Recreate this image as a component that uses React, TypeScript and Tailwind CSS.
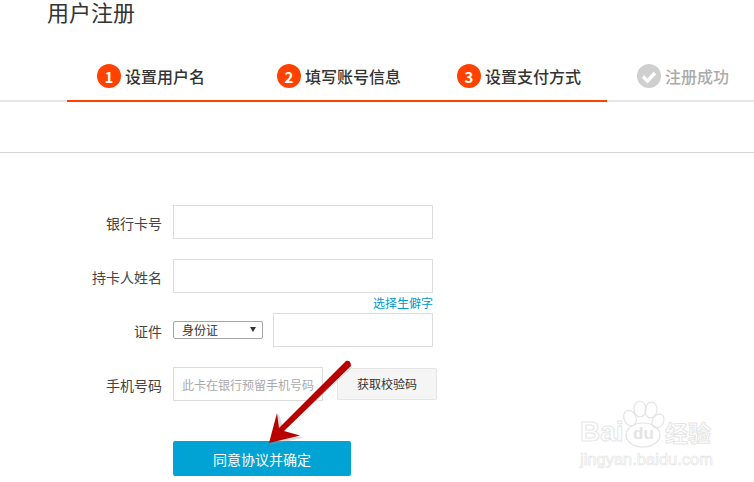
const font = "[font-family:'Noto_Sans_CJK_SC','Liberation_Sans',sans-serif]";

function Step({ n, label, active }: { n?: number; label: string; active: boolean }) {
  return (
    <div className={`flex h-[38px] w-[180px] shrink-0 items-start border-b-2 pl-[30px] ${active ? "border-[#ff4200]" : "border-transparent"}`}>
      {active ? (
        <span className="flex h-6 w-6 items-center justify-center rounded-full bg-[#ff4200] text-[15px] font-bold leading-none text-white">
          {n}
        </span>
      ) : (
        <svg width="24" height="24" viewBox="0 0 24 24">
          <circle cx="12" cy="12" r="12" fill="#cfcfcf" />
          <path d="M6 12.5l4.5 4.5L18 9" fill="none" stroke="#fff" strokeWidth="3.4" />
        </svg>
      )}
      <span className={`ml-1 text-base font-medium leading-6 ${active ? "text-[#333]" : "text-[#aaa]"}`}>{label}</span>
    </div>
  );
}

function Row({ label, className, children }: { label: string; className?: string; children: React.ReactNode }) {
  return (
    <div className={`flex ${className ?? ""}`}>
      <label className="mr-[11px] w-[162px] shrink-0 self-center pt-[1px] text-right text-sm leading-5 text-[#444]">{label}</label>
      {children}
    </div>
  );
}

const box = "h-[34px] border border-[#ddd] bg-white";

export default function App() {
  return (
    <div className={`relative h-[482px] w-[754px] overflow-hidden bg-white ${font}`}>
      <h1 className="h-[64px] pl-[47px] text-[22px] font-normal leading-[22px] text-[#333]">用户注册</h1>

      <div className="h-[38px] border-b-2 border-[#e6e6e6]">
        <div className="flex pl-[67px]">
          <Step n={1} label="设置用户名" active />
          <Step n={2} label="填写账号信息" active />
          <Step n={3} label="设置支付方式" active />
          <Step label="注册成功" active={false} />
        </div>
      </div>

      <div className="mt-[50px] border-t border-[#d5d5d5]" />

      <form className="pt-[52px]">
        <Row label="银行卡号">
          <input className={`${box} w-[260px]`} />
        </Row>
        <Row label="持卡人姓名" className="mt-5">
          <input className={`${box} w-[260px]`} />
        </Row>
        <div className="flex h-[20px] w-[433px] items-center justify-end text-xs leading-4 text-[#0099cc]">选择生僻字</div>
        <Row label="证件">
          <div className="flex items-center">
            <div className="relative flex h-[18px] w-[90px] items-center rounded-[2px] border border-[#a6a6a6] pl-2 text-xs leading-none text-[#333]">
              身份证
              <span className="absolute right-[6px] top-[5px] h-0 w-0 border-x-[3px] border-t-[5px] border-x-transparent border-t-[#333]" />
            </div>
            <input className={`${box} ml-[10px] w-[160px]`} />
          </div>
        </Row>
        <Row label="手机号码" className="mt-5">
          <input
            className={`${box} w-[150px] pl-2 text-xs placeholder:text-[#aaa]`}
            placeholder="此卡在银行预留手机号码"
          />
          <button type="button" className="ml-[14px] h-[32px] w-[100px] self-center rounded-[2px] border border-[#e5e5e5] bg-[#f5f5f5] text-xs text-[#333]">
            获取校验码
          </button>
        </Row>
        <button type="button" className="ml-[173px] mt-[40px] block h-[35px] w-[178px] rounded-[2px] bg-[#00a3d3] text-sm text-white">
          同意协议并确定
        </button>
      </form>

      <svg className="absolute left-0 top-0" width="754" height="482" viewBox="0 0 754 482">
        <path d="M350 366 L280 431 M277 413 L269 443 L300 436 L283 433 Z" fill="#999" stroke="#999" strokeWidth="1" opacity="0.35" transform="translate(1.5 1.5)" />
        <path d="M346 361 Q351 360 351 366 L284 431 L300 435.5 L269 443 L277 413 L279 428 Z" fill="#b80000" />
      </svg>

      <div className="pointer-events-none absolute left-[580px] top-[400px] h-[70px] w-[140px]">
        <svg className="absolute left-0 top-0" width="140" height="50" viewBox="0 0 140 50" fill="none" stroke="#e4e4e4" strokeWidth="1.2">
          <ellipse cx="63" cy="35" rx="17" ry="12" />
          <ellipse cx="50" cy="18" rx="6" ry="8" transform="rotate(-25 50 18)" />
          <ellipse cx="60" cy="9" rx="6" ry="8" />
          <ellipse cx="71" cy="10" rx="6" ry="8" transform="rotate(10 71 10)" />
          <ellipse cx="78" cy="21" rx="5.5" ry="7.5" transform="rotate(30 78 21)" />
        </svg>
        <span className="absolute left-0 top-[16px] text-[28px] font-bold leading-8 text-transparent [-webkit-text-stroke:1px_#e6e6e6] [font-family:'Liberation_Sans',sans-serif]">Bai</span>
        <span className="absolute left-[53px] top-[26px] text-[17px] font-bold leading-4 text-[#e4e4e4] [font-family:'Liberation_Sans',sans-serif]">du</span>
        <span className="absolute left-[85px] top-[20px] text-[23px] font-bold leading-6 text-transparent [-webkit-text-stroke:1px_#e6e6e6]">经验</span>
        <span className="absolute left-0 top-[49px] text-[16.5px] leading-5 text-transparent [-webkit-text-stroke:0.7px_#e6e6e6] [font-family:'Liberation_Sans',sans-serif]">jingyan.baidu.com</span>
      </div>
    </div>
  );
}
